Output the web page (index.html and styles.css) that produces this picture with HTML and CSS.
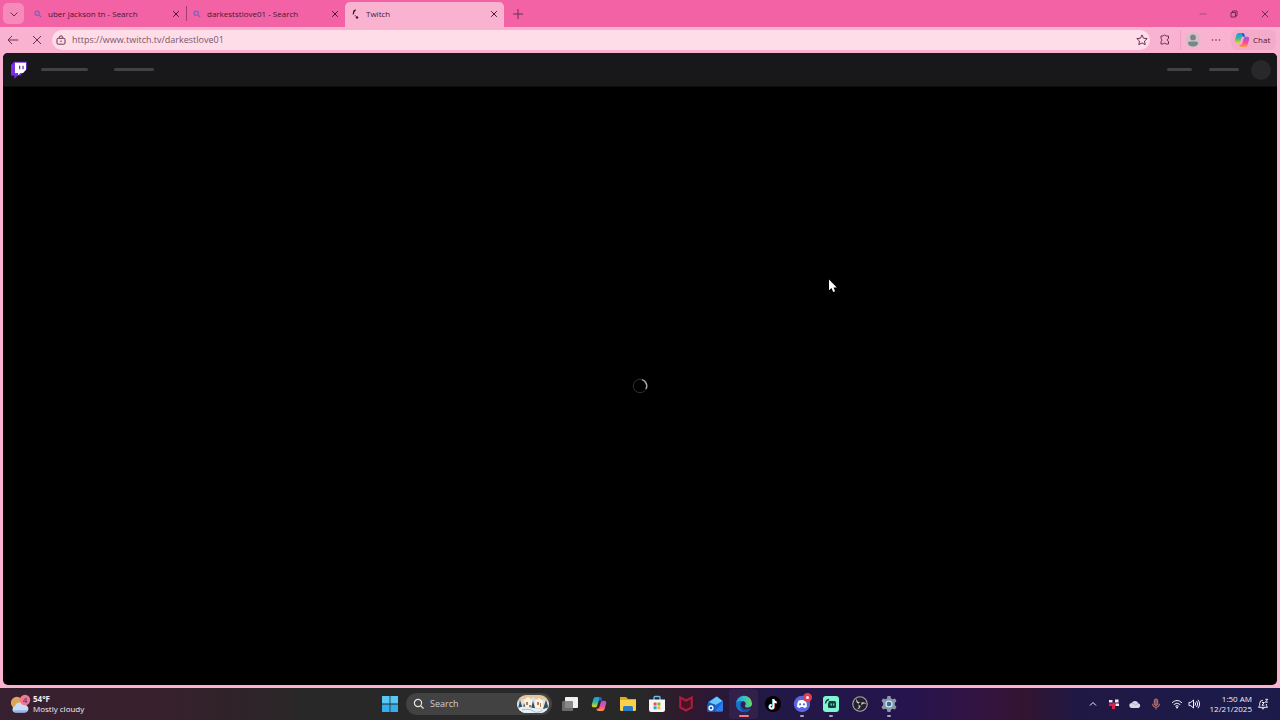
FILE: index.html
```html
<!DOCTYPE html>
<html lang="en">
<head>
    <meta charset="UTF-8">
    <title>Twitch</title>
    <link rel="stylesheet" href="styles.css">
</head>

<body>
<div class="browser">
    <!-- tabs -->
    <div class="tab_strip">
        <button class="tab_menu" aria-label="Tab actions">
            <svg width="10" height="10" viewBox="0 0 10 10"><path class="line" d="M1.5 3.5L5 7l3.5-3.5"/></svg>
        </button>
        <div class="tab">
            <svg class="favicon" width="8" height="8" viewBox="0 0 8 8"><circle cx="3.2" cy="3.2" r="2.1"/><path d="M4.9 4.9L7 7"/></svg>
            <button class="tab_title">uber jackson tn - Search</button>
            <button class="tab_close" aria-label="Close tab"><svg width="8" height="8" viewBox="0 0 8 8"><path class="line" d="M1.2 1.2l5.6 5.6M6.8 1.2L1.2 6.8"/></svg></button>
        </div>
        <div class="tab tab_divided">
            <svg class="favicon" width="8" height="8" viewBox="0 0 8 8"><circle cx="3.2" cy="3.2" r="2.1"/><path d="M4.9 4.9L7 7"/></svg>
            <button class="tab_title">darkeststlove01 - Search</button>
            <button class="tab_close" aria-label="Close tab"><svg width="8" height="8" viewBox="0 0 8 8"><path class="line" d="M1.2 1.2l5.6 5.6M6.8 1.2L1.2 6.8"/></svg></button>
        </div>
        <div class="tab tab_active">
            <svg width="8" height="12" viewBox="0 0 8 12"><path d="M3.6 1.2L1.4 2.4.6 6.4l1.3-.1.5-2.5 1.4-1z" fill="#301020"/><circle cx="5" cy="9.400" r="1.200" fill="#301020"/><circle cx="3.200" cy="7.800" r=".6" fill="#301020"/></svg>
            <button class="tab_title">Twitch</button>
            <button class="tab_close" aria-label="Close tab"><svg width="8" height="8" viewBox="0 0 8 8"><path class="line" d="M1.2 1.2l5.6 5.6M6.8 1.2L1.2 6.8"/></svg></button>
        </div>
        <button class="new_tab" aria-label="New tab"><svg width="12" height="12" viewBox="0 0 12 12"><path class="line" d="M6 1v10M1 6h10"/></svg></button>
        <div class="window_buttons">
            <button aria-label="Minimize"><svg width="8" height="8" viewBox="0 0 8 8"><path class="line faint" d="M.5 4h7"/></svg></button>
            <button aria-label="Restore"><svg width="8" height="8" viewBox="0 0 8 8"><path class="line" d="M1 2.5h4.5V7H1zM2.5 2.3V1H7v4.800H5.700"/></svg></button>
            <button aria-label="Close"><svg width="8" height="8" viewBox="0 0 8 8"><path class="line" d="M.8.8l6.4 6.4M7.2.8L.8 7.2"/></svg></button>
        </div>
    </div>

    <!-- address bar -->
    <div class="toolbar">
        <button class="tool" aria-label="Back"><svg width="12" height="12" viewBox="0 0 12 12"><path class="line" d="M11.3 6H1M5 2L1 6l4 4"/></svg></button>
        <button class="tool" aria-label="Stop"><svg width="10" height="10" viewBox="0 0 10 10"><path class="line" d="M1 1l8 8M9 1L1 9"/></svg></button>
        <div class="address">
            <svg width="10" height="10" viewBox="0 0 10 10"><rect class="line" x="1" y="3.3" width="8" height="5.9" rx="1.2"/><path class="line" d="M3.2 3.2V2.6a1.8 1.8 0 0 1 3.6 0v.6"/><circle cx="5" cy="6.2" r=".8" fill="#6b4256"/></svg>
            <input type="text" aria-label="Address" value="https://www.twitch.tv/darkestlove01">
            <button aria-label="Favorite"><svg width="12" height="12" viewBox="0 0 12 12"><path class="line" d="M6 .9l1.5 3.3 3.7.4-2.7 2.5.7 3.6L6 8.9l-3.2 1.8.7-3.6L.8 4.6l3.7-.4z"/></svg></button>
        </div>
        <button class="tool ext" aria-label="Extensions"><svg width="12" height="12" viewBox="0 0 12 12"><path class="line" d="M2 2h2.200c.2-1.300 2.400-1.300 2.600 0h2.700v2.600c-1.700.1-1.700 2.600 0 2.700V10H6.800c-.2-1.200-2.400-1.200-2.600 0H2V7.400c1.200-.2 1.200-2.500 0-2.700z"/></svg></button>
        <button class="tool profile" aria-label="Profile"><svg width="16" height="16" viewBox="0 0 16 16"><circle cx="8" cy="8" r="7.8" fill="#d9bdca"/><circle cx="8" cy="5.4" r="2.9" fill="#748982"/><path d="M3 11.2q0-1.700 1.500-1.700h7q1.500 0 1.500 1.700Q12 14.500 8 14.500T3 11.2z" fill="#748982"/></svg></button>
        <button class="tool" aria-label="Settings and more"><svg width="12" height="12" viewBox="0 0 12 12"><g fill="#6b3050"><circle cx="2.600" cy="6" r=".8"/><circle cx="6" cy="6" r=".8"/><circle cx="9.400" cy="6" r=".8"/></g></svg></button>
        <button class="chat">
            <svg width="16" height="16" viewBox="0 0 16 16">
                <defs>
                    <linearGradient id="cop_a" x1="0" y1="0" x2="0" y2="1"><stop offset="0" stop-color="#159be8"/><stop offset=".5" stop-color="#31b893"/><stop offset="1" stop-color="#f4d31e"/></linearGradient>
                    <linearGradient id="cop_b" x1="0" y1="0" x2="0" y2="1"><stop offset="0" stop-color="#9557e8"/><stop offset=".55" stop-color="#f14c9a"/><stop offset="1" stop-color="#ff9b35"/></linearGradient>
                </defs>
                <path d="M10.8 3.2L10.2 2Q9.7 1 8.2 1H4.8Q3 1 2.4 3L.9 8.2Q.2 11.3 3 11.3h1.5q1.2 0 1.6-1.4l1.6-5.2q.4-1.5 1.7-1.5z" fill="url(#cop_a)"/>
                <path d="M5.2 12.8l.6 1.2q.5 1 2 1h3.4q1.8 0 2.4-2l1.5-5.2q.7-3.1-2.1-3.1h-1.5q-1.2 0-1.6 1.4l-1.6 5.2q-.4 1.5-1.7 1.5z" fill="url(#cop_b)"/>
                <path d="M8 1q2 0 2.4 1.6l.5 2.1H8.5z" fill="#2758cc"/>
            </svg>
            Chat
        </button>
    </div>

    <!-- twitch page while loading -->
    <div class="page">
        <header class="twitch_nav">
            <a href="#" class="logo" aria-label="Twitch"><svg width="18" height="18" viewBox="0 0 18 18"><path d="M4.2.8L1 4v10.6h3.4V18l3.3-3.4h2.7L16.8 8V.8z" fill="#7932e0"/><path d="M5 1.8h11v7L13.1 12h-2.6l-2.4 2.3V12H5z" fill="#fff"/><path d="M9 4.7h1.3v3.6H9zM12.4 4.7h1.3v3.6h-1.3z" fill="#6b35b8"/></svg></a>
            <span class="bar bar_long"></span>
            <span class="bar bar_mid"></span>
            <span class="bar bar_short"></span>
            <span class="bar bar_login"></span>
            <span class="avatar"></span>
        </header>
        <main class="content">
            <svg width="16" height="16" viewBox="0 0 16 16" fill="none"><circle cx="8" cy="8" r="6.7" stroke="#303030"/><path d="M10 1.600A6.700 6.700 0 0 1 14 11" stroke="#a8a8a8" stroke-width="1.5"/></svg>
        </main>
    </div>
</div>

<!-- windows taskbar -->
<footer class="taskbar">
    <button class="weather">
        <svg width="20" height="20" viewBox="0 0 20 20"><path d="M8 3.2A6 6 0 1 0 11 12L5 13A5 5 0 0 0 8 3.2z" fill="#dca458"/><path d="M4.5 18.5a3.3 3.3 0 0 1-.4-6.5 4.6 4.6 0 0 1 8.5-1.2 3.9 3.9 0 1 1 .9 7.7z" fill="#c9dcf6"/><path d="M1.6 16.2q1 2.3 2.9 2.3h9q2.5 0 3.5-2.3z" fill="#91b5ed"/><circle cx="14" cy="6" r="5.2" fill="#f27790"/><text class="count" x="14" y="9" text-anchor="middle">4</text></svg>
        <span class="weather_text"><b>54°F</b><span>Mostly cloudy</span></span>
    </button>

    <div class="apps">
        <button class="app" aria-label="Start"><svg width="16" height="16" viewBox="0 0 16 16"><g fill="#58c7f5"><path d="M0 0h7.6v7.6H0zM8.4 0H16v7.6H8.4z"/><path d="M0 8.4h7.6V16H0zM8.4 8.4H16V16H8.4z" fill="#34aeea"/></g></svg></button>
        <div class="search">
            <svg width="12" height="12" viewBox="0 0 12 12" fill="none" stroke="#e4e4e4" stroke-width="1.2"><circle cx="5" cy="5" r="3.6"/><path d="M7.6 7.600L10.500 10.500"/></svg>
            <input type="text" aria-label="Search" placeholder="Search">
            <svg width="32" height="18" viewBox="0 0 32 18">
                <defs><clipPath id="art"><rect width="32" height="18" rx="9"/></clipPath></defs>
                <g clip-path="url(#art)"><path d="M0 0h32v18H0z" fill="#e8c69c"/><path d="M0 8l6-4 5 3 5-5 6 4 5-2 5 4v10H0z" fill="#dbe0e4"/><path d="M7 5l4-3 4 3v8H7zM18 6l4-3 4 3v7h-8z" fill="#faf4e8"/><path d="M1 14L3 5l3 9zM26 14l3-9 3 9zM14 13l2-7 2 7zM6 13l1-5 2 5z" fill="#345466"/><path d="M9 7h2v3H9zM20 7h2v3h-2zM12 10h2v3h-2zM23 8h1v4h-1z" fill="#b87c48"/><path d="M0 13q8-3 16 0t16-1v6H0z" fill="#e6f0f5"/><path d="M5 15q7-2 11 1t10-1" stroke="#a9bfd0" fill="none"/></g>
            </svg>
        </div>
        <button class="app" aria-label="Task view"><svg width="18" height="18" viewBox="0 0 18 18"><rect x="4" y="2" width="13" height="11" rx="1" fill="#f0f0f0"/><rect x="1" y="6" width="11" height="10" rx="1" fill="#777" fill-opacity=".85"/></svg></button>
        <button class="app" aria-label="Copilot"><svg width="16" height="16" viewBox="0 0 16 16"><path d="M10.8 3.2L10.2 2Q9.7 1 8.2 1H4.8Q3 1 2.4 3L.9 8.2Q.2 11.3 3 11.3h1.5q1.2 0 1.6-1.4l1.6-5.2q.4-1.5 1.7-1.5z" fill="url(#cop_a)"/><path d="M5.2 12.8l.6 1.2q.5 1 2 1h3.4q1.8 0 2.4-2l1.5-5.2q.7-3.1-2.1-3.1h-1.5q-1.2 0-1.6 1.4l-1.6 5.2q-.4 1.5-1.7 1.5z" fill="url(#cop_b)"/><path d="M8 1q2 0 2.4 1.6l.5 2.1H8.5z" fill="#2758cc"/></svg></button>
        <button class="app" aria-label="File Explorer"><svg width="18" height="16" viewBox="0 0 18 16"><path d="M1 1h6l2 2h8v4H1z" fill="#e5a81d"/><path d="M1 4h16v9.5q0 1.5-1.5 1.5h-13Q1 15 1 13.500z" fill="#fbd04c"/><path d="M4 15v-3.500Q4 10 5.500 10h7q1.500 0 1.500 1.500V15z" fill="#277dc4"/></svg></button>
        <button class="app" aria-label="Microsoft Store"><svg width="16" height="18" viewBox="0 0 16 18"><path d="M5 5V2.500Q5 1.500 6 1.500h4q1 0 1 1V5" fill="none" stroke="#62c4ee" stroke-width="1.300"/><path d="M0 4.500h16V15q0 2-2 2H2q-2 0-2-2z" fill="#f4f6f8"/><path d="M4.600 7.500h3v3h-3z" fill="#e95536"/><path d="M8.400 7.500h3v3h-3z" fill="#79b83a"/><path d="M4.600 11.300h3v3h-3z" fill="#2e9fe0"/><path d="M8.400 11.300h3v3h-3z" fill="#f5ba29"/></svg></button>
        <button class="app" aria-label="McAfee"><svg width="14" height="16" viewBox="0 0 14 16"><path d="M1.200 1.500L7 4.500l5.800-3v10L7 14.500l-5.800-3z" fill="#4b1227" stroke="#b01d38" stroke-width="2"/></svg></button>
        <button class="app" aria-label="Outlook"><svg width="18" height="18" viewBox="0 0 18 18"><path d="M2 7l8-5.500L17 6v9q0 1.500-1.500 1.500h-12Q2 16.500 2 15z" fill="#1768d5"/><path d="M3 7L11 1.500l5.500 4.500-7 4z" fill="#69c5fa"/><path d="M17 6.500V15q0 1.500-1.500 1.500H9z" fill="#3279ea"/><rect x="1" y="9" width="8" height="8" rx="1.500" fill="#125bb8"/><circle cx="5" cy="13" r="2" fill="none" stroke="#fff" stroke-width="1.300"/></svg></button>
        <button class="app app_active" aria-label="Edge">
            <svg width="18" height="18" viewBox="0 0 18 18">
                <defs><linearGradient id="edge" x1="0" y1=".5" x2="1" y2=".4"><stop offset="0" stop-color="#2498e5"/><stop offset=".5" stop-color="#31bfd0"/><stop offset="1" stop-color="#73d94d"/></linearGradient></defs>
                <path d="M1 9a8 8 0 0 1 16-.7c.2 3-2.200 4.200-4.500 4.200-2.200 0-3-1-2.500-1.800 1.500-2 .5-4.400-2.200-4.400C4.500 6.300 1.800 7 1 9z" fill="url(#edge)"/>
                <path d="M1 9c1-2.400 3.700-3.100 6.800-2.700C5.500 7.500 5.300 10 6.500 12c2 3 6 3.400 9.300 1.300A8 8 0 0 1 1 9z" fill="#1674cb"/>
                <path d="M6 7.300C4.300 10 5 15.500 9.500 17c2.500 0 5-1.500 6.300-3.700-3.300 2.100-7.300 1.700-9.300-1.300C5.600 10.500 5.500 8.600 6 7.300z" fill="#154fa3"/>
            </svg>
            <span class="mark mark_active"></span>
        </button>
        <button class="app" aria-label="TikTok"><svg width="18" height="18" viewBox="0 0 18 18"><circle cx="9" cy="9" r="8" fill="#000"/><g fill="none" stroke-width="1.700"><path d="M9 4v7.600a1.900 1.900 0 1 1-1.900-1.900M9 4.500q.5 2.600 3.100 2.700" stroke="#2de0df"/><path d="M10 4.500v7.600a1.900 1.900 0 1 1-1.900-1.900M10 5q.5 2.600 3.100 2.700" stroke="#f0325c"/><path d="M9.500 4v7.800a1.900 1.900 0 1 1-1.900-1.900M9.500 4.500Q10 7.200 12.600 7.300" stroke="#fff"/></g></svg></button>
        <button class="app" aria-label="Discord">
            <svg width="18" height="18" viewBox="0 0 18 18"><circle cx="9" cy="9" r="8.200" fill="#5966df"/><path d="M5.500 5.500Q9 4.300 12.500 5.500q1.700 2.700 1.500 6.200-1.500 1.200-3 1.400l-.7-1H7.700l-.7 1q-1.500-.2-3-1.400-.2-3.500 1.500-6.200z" fill="#fff"/><circle cx="7.100" cy="9.300" r="1.100" fill="#5966df"/><circle cx="10.900" cy="9.300" r="1.100" fill="#5966df"/></svg>
            <span class="badge"></span>
            <span class="mark"></span>
        </button>
        <button class="app" aria-label="Streamlabs"><svg width="18" height="18" viewBox="0 0 18 18"><rect x="1" y="1" width="16" height="16" rx="3" fill="#80f5d2"/><path d="M7 6h5.500Q14 6 14 7.500v4q0 1.500-1.500 1.500h-5Q6 13 6 11.500V9z" fill="#123f3c"/><path d="M3.500 8.500Q3.800 5 7 4.300" fill="none" stroke="#123f3c" stroke-width="1.300"/><path d="M9.200 8.500v2M11.700 8.500v2" stroke="#80f5d2" stroke-width="1.100"/></svg><span class="mark"></span></button>
        <button class="app" aria-label="OBS Studio"><svg width="18" height="18" viewBox="0 0 18 18"><circle cx="9" cy="9" r="7.200" fill="#242128" stroke="#aaa7ad" stroke-width="1.100"/><g fill="#c8c5cb"><path d="M8.500 9C5.500 8.500 4.500 6 5.800 3.500 5.600 6 7 7.400 9.300 7.300z"/><path d="M9.300 8.700c2-2.300 4.700-1.900 6.200.5-2-1.400-4-.9-5 1.200z"/><path d="M9.200 9.300c1 2.900-.7 5-3.500 5 2.200-1 2.700-2.900 1.400-4.800z"/></g><circle cx="9" cy="9" r="1.500" fill="#17151a"/></svg></button>
        <button class="app" aria-label="Settings"><svg width="18" height="18" viewBox="0 0 18 18"><path d="M7.500 1h3l.6 2.400 1.500.8 2.400-.7 1.500 2.600L14.800 8v2l1.700 1.900-1.500 2.600-2.400-.7-1.500.8-.6 2.400h-3l-.6-2.400-1.500-.8-2.400.7-1.500-2.600L3.200 10V8L1.500 6.100 3 3.500l2.400.7 1.500-.8z" fill="#8d98a6"/><circle cx="9" cy="9" r="3.600" fill="#d4e1ec"/><circle cx="9" cy="9" r="2.300" fill="#276fab"/></svg><span class="mark"></span></button>
    </div>

    <div class="tray">
        <button aria-label="Show hidden icons"><svg width="8" height="8" viewBox="0 0 8 8"><path class="light" d="M1 5.500l3-3 3 3"/></svg></button>
        <button aria-label="Updates"><svg width="12" height="12" viewBox="0 0 12 12"><path d="M1 2h3.500v2.500H1zM7 1.500h3.500v3H7zM7.500 5.500H11V8H7.500z" fill="#f2e9f0"/><path d="M1 5.500h3.500V4.500h2.500V11H4V8H1z" fill="#e11d49"/></svg></button>
        <button aria-label="OneDrive"><svg width="12" height="12" viewBox="0 0 12 12"><path d="M3 10a2.500 2.500 0 0 1-.3-5A3.700 3.700 0 0 1 9.300 5.200 2.500 2.500 0 0 1 9.500 10z" fill="#d6d8e6"/><path d="M2.500 5q2.500 0 4 2l3-1.800" fill="none" stroke="#9b9db7" stroke-width=".7"/></svg></button>
        <button aria-label="Microphone"><svg width="12" height="12" viewBox="0 0 12 12"><rect x="4.300" y="1" width="3.400" height="6.500" rx="1.700" fill="#884c52" stroke="#d58c84" stroke-width=".8"/><path d="M2.500 5.800a3.500 3.500 0 0 0 7 0M6 9.300V11.500" fill="none" stroke="#d58c84" stroke-width=".9"/></svg></button>
        <button class="network" aria-label="Network and volume">
            <svg width="12" height="12" viewBox="0 0 12 12"><path class="light" d="M1 4.800q5-4.600 10 0M2.700 6.600q3.300-3 6.600 0M4.400 8.300q1.600-1.400 3.200 0"/><circle cx="6" cy="9.600" r="1" fill="#f0eef6"/></svg>
            <svg width="12" height="12" viewBox="0 0 12 12"><path class="light" d="M1 4.400h1.800L5.500 2v8L2.800 7.600H1zM7 4.300q1.300 1.700 0 3.400M8.600 3q2.300 3 0 6M10 1.800q3.200 4.200 0 8.400"/></svg>
        </button>
        <button class="clock"><span>1:50 AM</span><span>12/21/2025</span></button>
        <button aria-label="Notifications"><svg width="12" height="12" viewBox="0 0 12 12"><path class="light" d="M6 2.200Q2.800 2.200 2.700 5.400V7.500L1.500 9.300h9L9.400 7.500V6M4.700 10.300q1.300 1.400 2.600 0M5 4.500h2.300L5 7.200h2.300M8.300 1.300h2.500L8.300 4.200h2.500"/></svg></button>
    </div>
</footer>

<svg class="cursor" width="10" height="14" viewBox="0 0 10 14"><path d="M1 .5v10.800l2.500-2.200 1.700 4 1.900-.8L5.500 8.500h3.300z" fill="#fff"/></svg>
</body>
</html>
```

FILE: styles.css
```css
*{
    box-sizing: border-box;
}
body{
    margin: 0;
    height: 100vh;
    display: flex;
    flex-direction: column;
    font-family: "Open Sans", "Noto Sans", sans-serif;
    font-size: 8px;
    line-height: 10px;
    color: #4a1630;
    background: #f9b3d0;
    overflow: hidden;
}
button,input{
    border: 0;
    padding: 0;
    margin: 0;
    background: none;
    font: inherit;
    color: inherit;
}
input{
    flex: 1;
    min-width: 0;
    outline: 0;
}
button{
    display: flex;
    align-items: center;
    justify-content: center;
    flex-shrink: 0;
}
svg{
    display: block;
    flex-shrink: 0;
}
.line{
    fill: none;
    stroke: #6b3050;
    stroke-width: 1;
}
.faint{
    opacity: 0.5;
}
.light{
    fill: none;
    stroke: #f0eef6;
    stroke-width: 1;
}
.browser{
    flex: 1;
    min-height: 0;
    display: flex;
    flex-direction: column;
}

/* tab strip */
.tab_strip{
    display: flex;
    height: 27px;
    background: #f362a4;
}
.tab_menu{
    width: 21px;
    height: 21px;
    margin: 3px;
    border-radius: 5px;
    background: #f68bbb;
}
.tab{
    display: flex;
    align-items: center;
    width: 159px;
    height: 25px;
    margin-top: 2px;
    padding: 0 5px 2px 6px;
    gap: 6px;
    border-left: 1px solid transparent;
}
.tab_divided{
    border-image: linear-gradient(transparent 20%, #a73c70 20%, #a73c70 75%, transparent 75%) 1;
}
.tab_active{
    background: #f9b3d0;
    border-radius: 5px 5px 0 0;
}
.tab_title{
    flex: 1;
    justify-content: flex-start;
    white-space: nowrap;
}
.tab_close{
    width: 10px;
    height: 12px;
}
.tab_close .line{
    stroke: #4a1630;
}
.favicon{
    fill: none;
    stroke: #7a62c0;
    stroke-width: 1.2px;
}
.new_tab{
    width: 28px;
}
.window_buttons{
    display: flex;
    margin-left: auto;
}
.window_buttons button{
    width: 31px;
}

/* toolbar */
.toolbar{
    display: flex;
    align-items: center;
    height: 26px;
    padding: 0 4px 0 1px;
}
.tool{
    width: 24px;
    height: 20px;
}
.address{
    flex: 1;
    display: flex;
    align-items: center;
    height: 20px;
    margin-left: 3px;
    padding: 0 2px 0 4px;
    gap: 6px;
    border-radius: 10px;
    background: #fedde9;
    color: #7c5568;
    font-size: 9px;
}
.ext{
    width: 30px;
}
.profile{
    border-left: 1px solid #eaa2c0;
}
.chat{
    justify-content: flex-start;
    width: 45px;
    height: 20px;
    margin-left: 3px;
    padding-left: 3px;
    gap: 3px;
    border-radius: 6px;
    background: #f4abca;
}

/* page */
.page{
    flex: 1;
    display: flex;
    flex-direction: column;
    margin: 0 3px 3px;
    border-radius: 5px;
    overflow: hidden;
    background: #000;
}
.twitch_nav{
    display: flex;
    align-items: center;
    height: 34px;
    padding: 0 6px 0 7px;
    background: #18181b;
    border-bottom: 1px solid #0d0d0e;
}
.bar{
    height: 3px;
    border-radius: 2px;
    background: #424245;
}
.bar_long{
    width: 47px;
    margin-left: 13px;
}
.bar_mid{
    width: 40px;
    margin-left: 26px;
}
.bar_short{
    width: 25px;
    margin-left: auto;
}
.bar_login{
    width: 30px;
    margin: 0 12px 0 17px;
}
.avatar{
    width: 20px;
    height: 20px;
    border-radius: 50%;
    background: #28282b;
}
.content{
    flex: 1;
    display: flex;
    align-items: center;
    justify-content: center;
}

/* taskbar */
.taskbar{
    display: grid;
    grid-template-columns: 1fr auto 1fr;
    align-items: center;
    height: 32px;
    color: #f3eef5;
    background: linear-gradient(90deg, #362030 0%, #3a202d 10%, #302229 18%, #282828 24%, #282828 50%, #30172f 54%, #211944 59%, #25144e 71%, #341340 77%, #33142f 80%, #201844 84%, #1b1b4b 100%);
}
.weather{
    justify-self: start;
    padding-left: 11px;
    gap: 2px;
    text-align: left;
}
.count{
    font-size: 8px;
    fill: #612135;
}
.weather_text,.clock{
    display: flex;
    flex-direction: column;
}
.apps{
    display: flex;
    align-items: center;
    padding-right: 2px;
}
.app{
    position: relative;
    width: 29px;
    height: 30px;
}
.app_active{
    background: #33204a;
    border-radius: 4px;
}
.search{
    display: flex;
    align-items: center;
    width: 146px;
    height: 22px;
    margin: 0 3px 0 2px;
    padding: 0 3px 0 7px;
    gap: 5px;
    border-radius: 11px;
    background: #424242;
    font-size: 9px;
}
.search input::placeholder{
    color: #cfcfcf;
    opacity: 1;
}
/* dot under a running app */
.mark{
    position: absolute;
    bottom: 2px;
    left: 50%;
    width: 4px;
    height: 2px;
    margin-left: -2px;
    border-radius: 1px;
    background: #a8a0bd;
}
.mark_active{
    width: 10px;
    margin-left: -5px;
    background: #f27a82;
}
.badge{
    position: absolute;
    top: 4px;
    right: 4px;
    width: 9px;
    height: 9px;
    border: 3px solid #e33e50;
    border-radius: 50%;
    background: #fff;
}
.tray{
    display: flex;
    align-items: center;
    justify-content: flex-end;
    padding-right: 7px;
}
.tray button{
    width: 21px;
    height: 24px;
}
.tray .network{
    width: 38px;
    gap: 5px;
}
.tray .clock{
    width: 48px;
    align-items: flex-end;
}

.cursor{
    position: absolute;
    left: 828px;
    top: 279px;
}
```
